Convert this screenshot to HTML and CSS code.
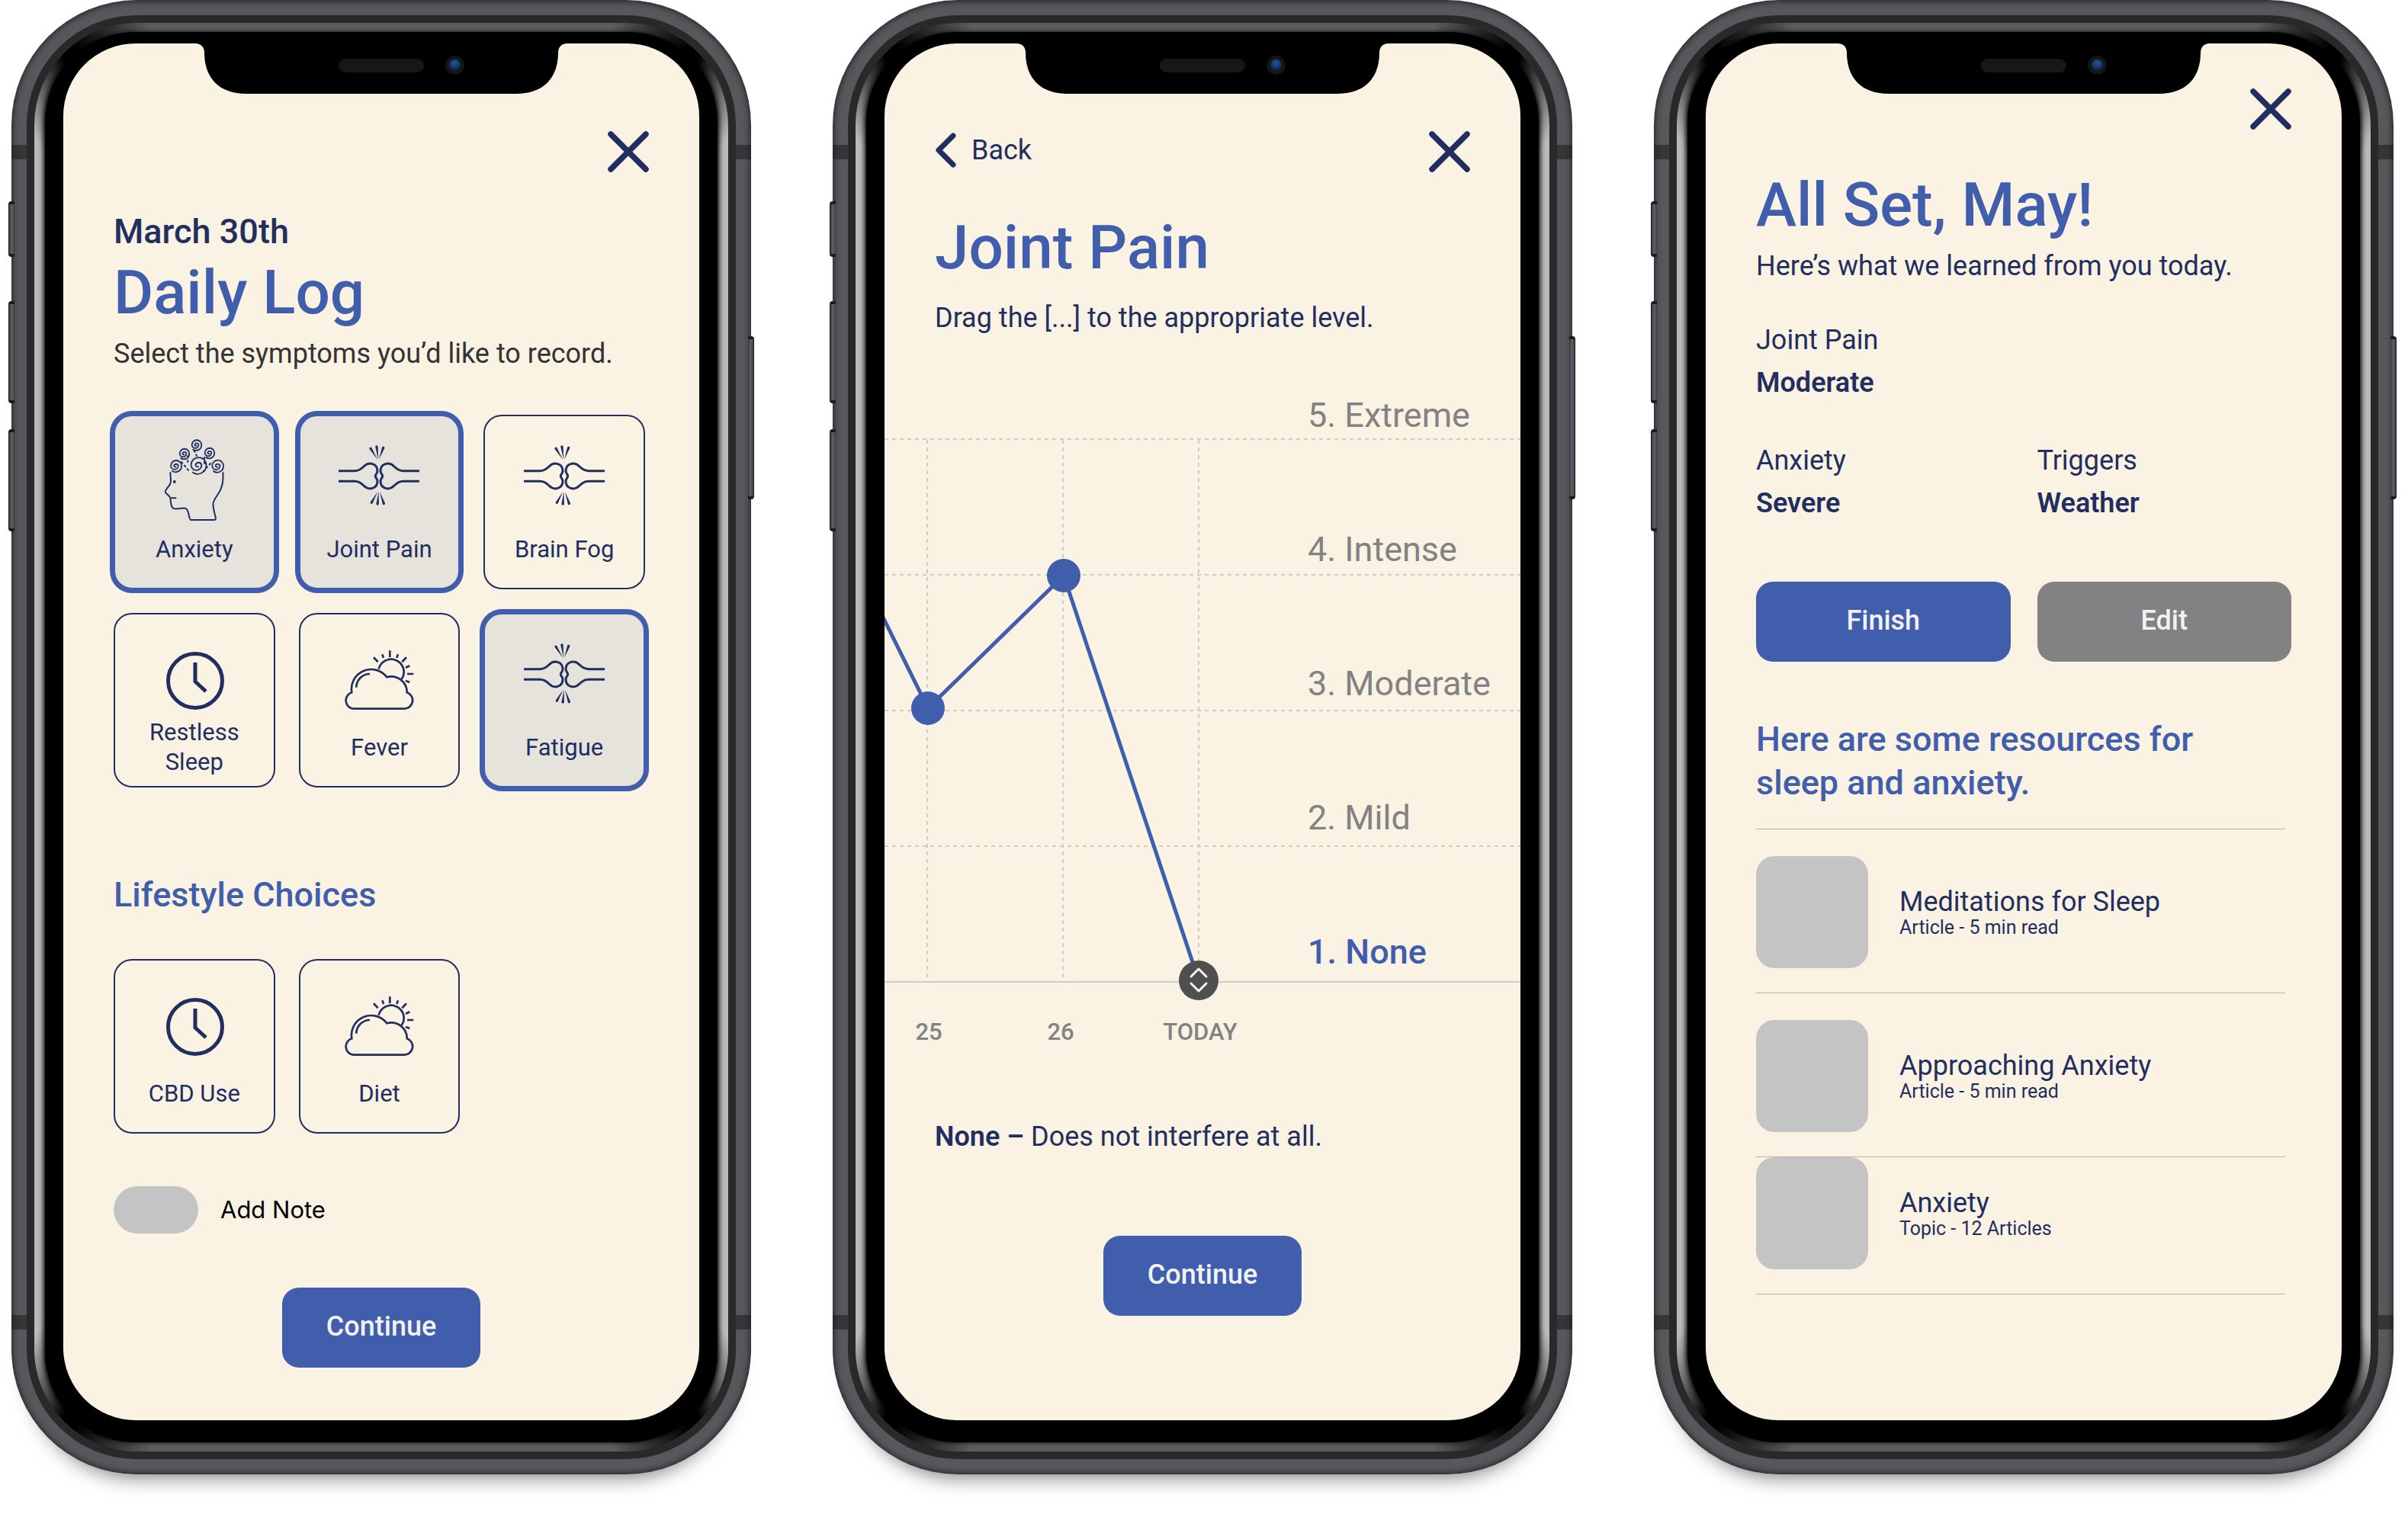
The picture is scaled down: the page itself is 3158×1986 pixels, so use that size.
FILE: index.html
```html
<!DOCTYPE html>
<html lang="en">
<head>
<meta charset="utf-8">
<meta name="viewport" content="width=device-width, initial-scale=1">
<title>Daily Log</title>
<link rel="stylesheet" href="styles.css">
</head>
<body>
<svg class="sprite" aria-hidden="true">
  <defs>
    <radialGradient id="lens" cx="50%" cy="30%" r="70%">
      <stop offset="0" stop-color="#1c5c9c"/>
      <stop offset="1" stop-color="#101a3c"/>
    </radialGradient>
  </defs>
  <symbol id="notch" viewBox="0 0 488 66">
    <path d="M0 0C8 0 12 5 12 12C12 46 32 66 67 66H421C456 66 476 46 476 12C476 5 480 0 488 0Z" fill="#000"/>
    <rect x="188" y="20" width="112" height="18" rx="9" fill="#171717"/>
    <circle cx="340.500" cy="28.500" r="12.500" fill="#151517"/>
    <circle cx="340.500" cy="28.500" r="7.500" fill="url(#lens)"/>
  </symbol>
  <symbol id="close" viewBox="0 0 54 54">
    <path d="M4 4L50 50M50 4L4 50" fill="none" stroke="currentColor" stroke-width="7.500" stroke-linecap="round"/>
  </symbol>
  <symbol id="half-joint" viewBox="0 0 108 104">
    <path d="M1 40.700H22C27 40.700 31 38 34 35C41 28 52 31 52 41C52 44 49.300 45 49.300 47.500C49.300 50 52 51 52 54C52 64 41 67 34 60C31 57 27 54.300 22 54.300H1" fill="none" stroke="currentColor" stroke-width="3"/>
  </symbol>
  <symbol id="joint" viewBox="0 0 108 104">
    <use href="#half-joint" width="108" height="104"/>
    <use href="#half-joint" width="108" height="104" transform="translate(108 0) scale(-1 1)"/>
    <path d="M41.500 12A1.600 1.600 0 0 1 44.500 10.500L52 25.700ZM49.200 9A1.600 1.600 0 0 1 52.700 9L53 25.700ZM58 10A1.600 1.600 0 0 1 61.300 11L54 25.700ZM42.800 81.500A1.600 1.600 0 0 0 45.800 83L52.300 68ZM50.400 84A1.600 1.600 0 0 0 53.900 84L53.500 68ZM58.700 84A1.600 1.600 0 0 0 62 83L55 68Z" fill="currentColor"/>
  </symbol>
  <symbol id="clock" viewBox="0 0 108 104">
    <g fill="none" stroke="currentColor" stroke-width="5">
      <circle cx="55" cy="56" r="35.500"/>
      <path d="M55 32V57L69 70"/>
    </g>
  </symbol>
  <symbol id="weather" viewBox="0 0 108 104">
    <g fill="none" stroke="currentColor" stroke-width="2.700">
      <path d="M20.300 92.700H87A11 11 0 0 0 90.700 71.300A20.600 20.600 0 0 0 64.300 51.300A25.800 25.800 0 0 0 18.300 71.300A11 11 0 0 0 20.300 92.700Z"/>
      <path d="M24.300 64.700A17.700 17.700 0 0 1 42 47"/>
      <path d="M53.700 40.700A16.700 16.700 0 1 1 83.700 54"/>
      <path d="M68.300 16.300V25M58.300 21.300L60 26M47 25.300L52.700 31.300M79 21.300L77.300 26M90 25.300L84.300 31.300M94.300 36.300L89 38.700M91 47H99.300M89 56L94.300 58"/>
    </g>
  </symbol>
  <symbol id="curl" viewBox="-8 -8 16 16" overflow="visible">
    <path d="M1 1A1.600 1.600 0 0 1 -1.500 0A2.400 2.400 0 0 1 3.200 0A4.100 4.100 0 0 1 -5 0A5.900 5.900 0 0 1 6.800 0A6.600 6.600 0 0 1 -4 5.400" fill="none" stroke="currentColor" stroke-width="1.800" vector-effect="non-scaling-stroke"/>
  </symbol>
  <symbol id="mind" viewBox="0 0 108 106" overflow="visible">
    <g fill="none" stroke="currentColor" stroke-width="2" stroke-linejoin="round" stroke-linecap="round">
      <path d="M22.500 43C22 49 24.500 54 22 58C20 62 15 66 15.800 68.500C16.500 71 21 72 22.200 76C23.500 80 22 90 28.500 90.300C34 91 40 88 43.500 90.500C47 93 46.500 105 49.500 105H80C85 105 78 94 78.500 84C79 75 91.500 69 91.500 50V43"/>
      <path d="M23 76.300H29.500"/>
      <path d="M37 29L47 41M45.300 21V32M53.500 14L57 21M67 31V21M75 31L65 42" stroke-dasharray="2 4"/>
    </g>
    <circle cx="27.800" cy="55" r="1.900" fill="currentColor"/>
    <use href="#curl" x="19.500" y="24.500" width="19" height="19"/>
    <use href="#curl" x="31.500" y="9.500" width="17" height="17"/>
    <use href="#curl" x="47.500" y="-2" width="17" height="17"/>
    <use href="#curl" x="64.500" y="8.500" width="17" height="17"/>
    <use href="#curl" x="73.500" y="24" width="20" height="20"/>
    <use href="#curl" x="44.500" y="19.500" width="27" height="27"/>
  </symbol>
</svg>

<div class="showcase">

  <div class="phone">
    <span class="key key-mute"></span><span class="key key-up"></span><span class="key key-down"></span><span class="key key-power"></span>
    <div class="bezel"><div class="rim"><div class="glass">
      <main class="screen">
        <svg class="notch" aria-hidden="true"><use href="#notch"/></svg>
        <div class="bar">
          <button class="icon-button" type="button" aria-label="Close"><svg class="close"><use href="#close"/></svg></button>
        </div>
        <header class="intro">
          <p class="date">March 30th</p>
          <h1 class="title">Daily Log</h1>
          <p class="lead lead-dark">Select the symptoms you’d like to record.</p>
        </header>
        <div class="tiles">
          <label class="tile"><input class="tile-check" type="checkbox" checked><svg class="tile-icon"><use href="#mind" width="108" height="106"/></svg><span class="tile-label">Anxiety</span></label>
          <label class="tile"><input class="tile-check" type="checkbox" checked><svg class="tile-icon"><use href="#joint"/></svg><span class="tile-label">Joint Pain</span></label>
          <label class="tile"><input class="tile-check" type="checkbox"><svg class="tile-icon"><use href="#joint"/></svg><span class="tile-label">Brain Fog</span></label>
          <label class="tile"><input class="tile-check" type="checkbox"><svg class="tile-icon"><use href="#clock"/></svg><span class="tile-label">Restless Sleep</span></label>
          <label class="tile"><input class="tile-check" type="checkbox"><svg class="tile-icon"><use href="#weather"/></svg><span class="tile-label">Fever</span></label>
          <label class="tile"><input class="tile-check" type="checkbox" checked><svg class="tile-icon"><use href="#joint"/></svg><span class="tile-label">Fatigue</span></label>
        </div>
        <h2 class="heading lifestyle">Lifestyle Choices</h2>
        <div class="tiles">
          <label class="tile"><input class="tile-check" type="checkbox"><svg class="tile-icon"><use href="#clock"/></svg><span class="tile-label">CBD Use</span></label>
          <label class="tile"><input class="tile-check" type="checkbox"><svg class="tile-icon"><use href="#weather"/></svg><span class="tile-label">Diet</span></label>
        </div>
        <label class="note"><input class="switch" type="checkbox" role="switch">Add Note</label>
        <button class="button button-center" type="button">Continue</button>
      </main>
    </div></div></div>
  </div>

  <div class="phone">
    <span class="key key-mute"></span><span class="key key-up"></span><span class="key key-down"></span><span class="key key-power"></span>
    <div class="bezel"><div class="rim"><div class="glass">
      <main class="screen">
        <svg class="notch" aria-hidden="true"><use href="#notch"/></svg>
        <div class="bar">
          <a class="back" href="#back"><svg class="chevron" viewBox="0 0 28 46" aria-hidden="true"><path d="M24 4L5 23L24 42" fill="none" stroke="currentColor" stroke-width="7" stroke-linecap="round" stroke-linejoin="round"/></svg>Back</a>
          <button class="icon-button" type="button" aria-label="Close"><svg class="close"><use href="#close"/></svg></button>
        </div>
        <header class="intro intro-spaced">
          <h1 class="title">Joint Pain</h1>
          <p class="lead">Drag the [...] to the appropriate level.</p>
        </header>
        <div class="chart">
          <svg class="plot" viewBox="0 0 834 860" role="img" aria-label="Joint pain by day">
            <g class="grid-lines">
              <path d="M0 59H834M0 237H834M0 415H834M0 593H834"/>
              <path d="M56 60V767M234 60V767M412 60V767"/>
            </g>
            <path class="axis" d="M0 771H834"/>
            <path class="series" d="M-30 236L57 412L235 238L412 769"/>
            <circle class="dot" cx="57" cy="412" r="22"/>
            <circle class="dot" cx="235" cy="238" r="22"/>
            <circle class="handle" cx="412" cy="769" r="26"/>
            <path class="handle-arrows" d="M402 764L412 754L422 764M402 773L412 783L422 773"/>
            <text class="day" x="58" y="847">25</text>
            <text class="day" x="231" y="847">26</text>
            <text class="day" x="414" y="847">TODAY</text>
          </svg>
          <ul class="levels">
            <li>5. Extreme</li>
            <li>4. Intense</li>
            <li>3. Moderate</li>
            <li>2. Mild</li>
            <li class="level-active">1. None</li>
          </ul>
          <input class="level-slider" type="range" min="1" max="5" value="1" aria-label="Pain level today">
        </div>
        <p class="lead verdict"><strong>None –</strong> Does not interfere at all.</p>
        <button class="button button-center button-low" type="button">Continue</button>
      </main>
    </div></div></div>
  </div>

  <div class="phone">
    <span class="key key-mute"></span><span class="key key-up"></span><span class="key key-down"></span><span class="key key-power"></span>
    <div class="bezel"><div class="rim"><div class="glass">
      <main class="screen screen-summary">
        <svg class="notch" aria-hidden="true"><use href="#notch"/></svg>
        <div class="bar">
          <button class="icon-button" type="button" aria-label="Close"><svg class="close"><use href="#close"/></svg></button>
        </div>
        <header class="intro intro-spaced">
          <h1 class="title">All Set, May!</h1>
          <p class="lead lead-tight">Here’s what we learned from you today.</p>
        </header>
        <dl class="facts">
          <div class="fact fact-wide"><dt>Joint Pain</dt><dd>Moderate</dd></div>
          <div class="fact"><dt>Anxiety</dt><dd>Severe</dd></div>
          <div class="fact"><dt>Triggers</dt><dd>Weather</dd></div>
        </dl>
        <div class="actions">
          <button class="button" type="button">Finish</button>
          <button class="button button-muted" type="button">Edit</button>
        </div>
        <h2 class="heading resources-heading">Here are some resources for sleep and anxiety.</h2>
        <ul class="resources">
          <li class="resource"><span class="cover"></span><div class="resource-text"><a class="resource-title" href="#meditations">Meditations for Sleep</a><p class="resource-meta">Article - 5 min read</p></div></li>
          <li class="resource"><span class="cover"></span><div class="resource-text"><a class="resource-title" href="#approaching">Approaching Anxiety</a><p class="resource-meta">Article - 5 min read</p></div></li>
          <li class="resource"><span class="cover"></span><div class="resource-text"><a class="resource-title" href="#anxiety">Anxiety</a><p class="resource-meta">Topic - 12 Articles</p></div></li>
        </ul>
      </main>
    </div></div></div>
  </div>

</div>
</body>
</html>
```
FILE: styles.css
```css
:root {
  --navy: #222e5f;
  --blue: #405eab;
  --cream: #faf2e2;
  --grey: #828282;
  --silver: #c4c4c4;
}

* { box-sizing: border-box; }

body {
  margin: 0;
  background: #fff;
  color: var(--navy);
  font: 400 36px/64px Roboto, "Liberation Sans", sans-serif;
}

h1, h2, p, ul, dl, dd { margin: 0; padding: 0; }
ul { list-style: none; }
button { font: inherit; border: 0; cursor: pointer; }
a { color: inherit; text-decoration: none; }
strong { font-weight: 600; }

.sprite { position: absolute; width: 0; height: 0; }

.showcase {
  display: grid;
  grid-template-columns: repeat(3, minmax(0, 1fr));
  gap: 107px;
  padding: 0 19px 52px 15px;
}

/* Device body */
.phone {
  position: relative;
  display: grid;
  padding: 20px;
  border-radius: 164px;
  background:
    linear-gradient(#363638, #363638) 0 190px / 100% 19px no-repeat,
    linear-gradient(#363638, #363638) 0 calc(100% - 190px) / 100% 19px no-repeat,
    #58575c;
  box-shadow: inset 0 0 9px 1px #1d1d20, 0 28px 26px -24px rgba(0, 0, 0, .5);
}

.bezel {
  display: grid;
  padding: 10px;
  border-radius: 144px;
  background: #29292a;
}

.rim {
  display: grid;
  padding: 12px 14px;
  border-radius: 134px;
  background: conic-gradient(
    #5c5c5c 0deg 18deg, #000 24deg 25deg, #bababa 30deg 150deg,
    #000 155deg 156deg, #5c5c5c 162deg 198deg, #000 204deg 205deg,
    #bababa 210deg 330deg, #000 335deg 336deg, #5c5c5c 342deg);
}

.glass {
  display: grid;
  padding: 15px 24px 29px;
  border-radius: 118px;
  background: #000;
  box-shadow: -4px 0 6px -2px #000, 4px 0 6px -2px #000;
}

.key {
  position: absolute;
  left: -4px;
  width: 8px;
  border: solid #1c1d20;
  border-width: 4px 0 4px 1px;
  border-radius: 4px 0 0 4px;
  background: linear-gradient(90deg, #3a3b40, #5f6067, #3f4045);
}
.key-mute { top: 264px; height: 73px; }
.key-up { top: 395px; height: 134px; }
.key-down { top: 563px; height: 134px; }
.key-power {
  top: 441px;
  left: auto;
  right: -4px;
  height: 214px;
  border-width: 4px 1px 4px 0;
  border-radius: 0 4px 4px 0;
}

/* Screen */
.screen {
  position: relative;
  display: flex;
  flex-direction: column;
  padding: 115px 66px 69px;
  border-radius: 95px;
  background: var(--cream);
}
.screen-summary { padding-top: 59px; }

.notch {
  position: absolute;
  top: -1px;
  left: calc(50% - 244px);
  width: 488px;
  height: 68px;
}

.bar {
  display: flex;
  align-items: center;
  height: 54px;
}

.icon-button {
  display: flex;
  margin-left: auto;
  padding: 0;
  background: none;
  color: var(--navy);
}
.close { width: 54px; height: 54px; }

.back {
  display: flex;
  align-items: center;
  gap: 20px;
  padding-bottom: 4px;
}
.chevron { width: 28px; height: 46px; }

.intro { margin-top: 46px; }
.intro-spaced { margin-top: 51px; }

.date { font-size: 45px; font-weight: 500; }
.title { color: var(--blue); font-size: 80px; font-weight: 500; line-height: 96px; }
.lead-dark { color: #333; }
.intro-spaced .lead { margin-top: 12px; }
.intro-spaced .lead-tight { margin-top: 0; }

.heading { color: var(--blue); font-size: 45px; font-weight: 500; }

/* Symptom tiles */
.tiles {
  display: grid;
  grid-template-columns: repeat(3, 1fr);
  gap: 31px;
  margin: 48px 5px 0 0;
}

.tile {
  position: relative;
  display: flex;
  flex-direction: column;
  align-items: center;
  padding: 31px 32px 12px;
  border: 2px solid var(--navy);
  border-radius: 24px;
  font-size: 31px;
  line-height: 39px;
  text-align: center;
}
.tile:has(:checked) {
  border-color: var(--blue);
  background: #e6e3dc;
  box-shadow: 0 0 0 5px var(--blue);
}
.tile-check { position: absolute; margin: 0; opacity: 0; }
.tile-icon { width: 108px; height: 104px; overflow: visible; }
.tile-label {
  display: flex;
  align-items: center;
  height: 78px;
  margin: 0 -24px;
}
.tile:has([href="#clock"]) .tile-label { margin: 0; }

.lifestyle { margin-top: 109px; }
.lifestyle + .tiles { margin-top: 52px; }

.note {
  display: flex;
  align-items: center;
  gap: 29px;
  margin-top: 69px;
  color: #000;
  font: 400 31px/66px Inter, sans-serif;
  height: 62px;
}
.switch {
  appearance: none;
  width: 111px;
  height: 62px;
  margin: 0;
  border-radius: 31px;
  background: var(--silver);
}

.button {
  height: 105px;
  padding: 0 56px 4px;
  border-radius: 22px;
  background: var(--blue);
  color: #f2f2f2;
  font-weight: 500;
}
.button-muted { background: var(--grey); }
.button-center { align-self: center; min-width: 260px; margin-top: 71px; }
.button-low { margin-top: 99px; }

/* Pain chart */
.chart {
  position: relative;
  display: grid;
  margin: 68px -66px 0;
}
.plot, .levels { grid-area: 1 / 1; }
.plot { width: 100%; overflow: hidden; }
.grid-lines { fill: none; stroke: #ccc; stroke-width: 2; stroke-dasharray: 5 5; }
.axis { stroke: #ccc; stroke-width: 2; }
.series { fill: none; stroke: var(--blue); stroke-width: 5; }
.dot { fill: var(--blue); }
.handle { fill: #4f4f4f; }
.handle-arrows { fill: none; stroke: #f2f2f2; stroke-width: 3; stroke-linecap: round; stroke-linejoin: round; }
.day { fill: var(--grey); font-size: 31px; font-weight: 500; text-anchor: middle; }

.levels {
  display: flex;
  flex-direction: column;
  gap: 120px;
  justify-self: end;
  width: 279px;
  color: var(--grey);
  font-size: 45px;
  line-height: 56px;
}
.level-active { color: var(--blue); font-weight: 500; }

.level-slider {
  position: absolute;
  top: 59px;
  left: calc(49% - 22px);
  width: 52px;
  height: 736px;
  margin: 0;
  writing-mode: vertical-lr;
  direction: rtl;
  opacity: 0;
}

.verdict { margin-top: 82px; }
.verdict + .button-low { margin-top: 98px; }

/* Summary */
.facts {
  display: grid;
  grid-template-columns: 1fr 1fr;
  gap: 46px 35px;
  margin-top: 37px;
  line-height: 56px;
}
.fact-wide { grid-column: 1 / -1; }
.fact dd { font-weight: 600; }

.actions {
  display: grid;
  grid-template-columns: 1fr 1fr;
  gap: 35px;
  margin-top: 75px;
}

.resources-heading {
  max-width: 640px;
  margin-top: 73px;
  line-height: 57px;
}

.resources {
  margin: 32px 8px 0 0;
  border-top: 1px solid #b8b3a7;
}
.resource {
  display: flex;
  align-items: center;
  gap: 41px;
  padding: 35px 0 32px;
  border-bottom: 1px solid #b8b3a7;
}
.resource:last-child { padding-top: 0; }
.cover {
  width: 147px;
  height: 147px;
  border-radius: 24px;
  background: var(--silver);
}
.resource-title { display: block; line-height: 40px; }
.resource-meta { font-size: 25px; line-height: 28px; }
```
